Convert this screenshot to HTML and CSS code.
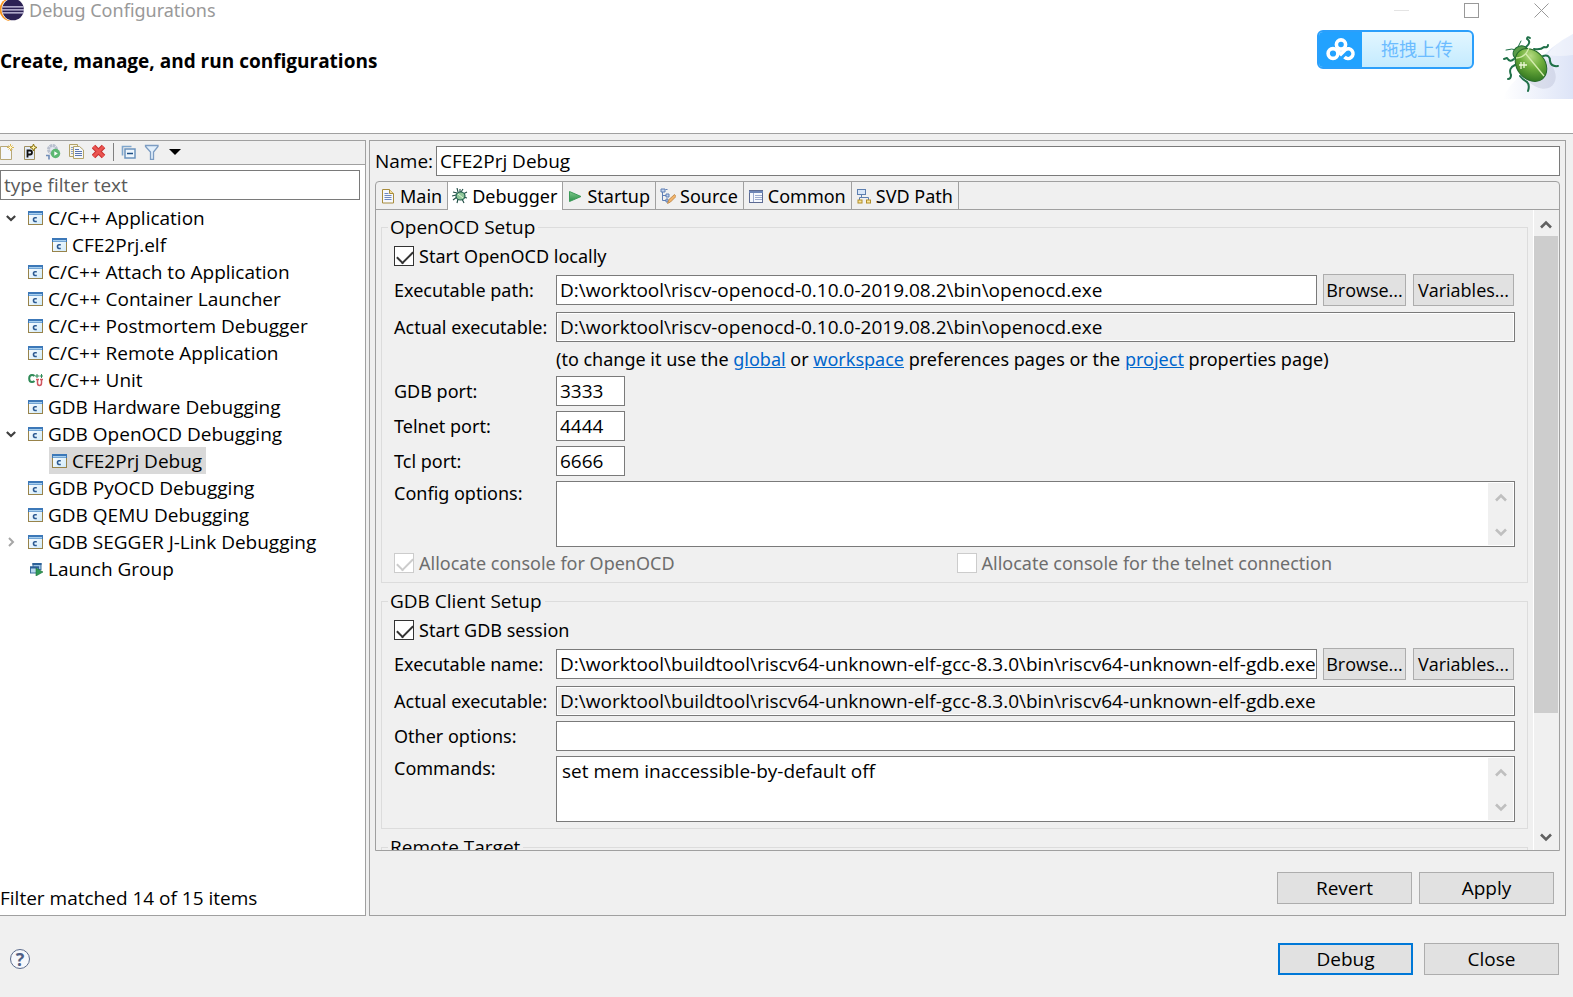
FILE: index.html
```html
<!DOCTYPE html>
<html lang="en">
<head>
    <meta charset="UTF-8">
    <meta name="viewport" content="width=device-width, initial-scale=1.0">
    <title>Debug Configurations</title>
    <link rel="stylesheet" href="styles.css">
</head>
<body>
    <!-- shared icons -->
    <svg class="icon-defs" aria-hidden="true">
        <defs>
            <linearGradient id="paneFill" x1="0" y1="0" x2="1" y2="1">
                <stop offset="0" stop-color="#ffffff"/>
                <stop offset="1" stop-color="#cfeafa"/>
            </linearGradient>
            <linearGradient id="greenFill" x1="0" y1="0" x2="0" y2="1">
                <stop offset="0" stop-color="#7cc98a"/>
                <stop offset="1" stop-color="#2d8f4a"/>
            </linearGradient>
            <symbol id="i-capp" viewBox="0 0 15 14">
                <rect x="0.5" y="0.5" width="14" height="13" fill="url(#paneFill)" stroke="#98834a"/>
                <path d="M0 0h15v4H0z" fill="#3c78b8"/>
                <path d="M1 2h13v1.500H1z" fill="#a8d0ef"/>
                <path d="M8.800 6.700H7Q5.500 6.700 5.500 8.600T7 10.500H8.800" fill="none" stroke="#2c5a92" stroke-width="1.600"/>
            </symbol>
            <symbol id="i-down" viewBox="0 0 12 10">
                <path d="M1 2.500L6 7.500L11 2.500" fill="none" stroke="currentColor" stroke-width="2.600"/>
            </symbol>
            <symbol id="i-up" viewBox="0 0 12 10">
                <path d="M1 7.500L6 2.500L11 7.500" fill="none" stroke="currentColor" stroke-width="2.600"/>
            </symbol>
        </defs>
    </svg>

    <!-- title bar and banner -->
    <header class="banner">
        <div class="title-bar">
            <svg class="logo" width="25" height="22" viewBox="0 0 25 22">
                <circle cx="11" cy="9.500" r="11.500" fill="#f7941e"/>
                <circle cx="13" cy="9.500" r="11.500" fill="#fff"/>
                <circle cx="13" cy="9.500" r="10.800" fill="#2c2255"/>
                <path d="M2.500 6.800h21M2 9.800h22M2.500 12.800h21" stroke="#d8d4ee" stroke-width="1.300"/>
            </svg>
            <span class="window-title">Debug Configurations</span>
            <div class="window-controls">
                <button class="win-btn" aria-label="Minimize"><svg width="16" height="16"><path d="M0 7.500h15" stroke="#e4e4e4"/></svg></button>
                <button class="win-btn" aria-label="Maximize"><svg width="16" height="16"><rect x="0.500" y="0.500" width="14" height="14" fill="none" stroke="#999"/></svg></button>
                <button class="win-btn" aria-label="Close window"><svg width="16" height="16"><path d="M0.500 0.500l14 14M14.500 0.500l-14 14" stroke="#999"/></svg></button>
            </div>
        </div>
        <h1 class="heading">Create, manage, and run configurations</h1>

        <button class="upload">
            <span class="upload-icon">
                <svg width="30" height="24" viewBox="0 0 30 24" fill="none" stroke="#fff" stroke-width="3.600">
                    <circle cx="15" cy="6.500" r="4.600"/>
                    <circle cx="7" cy="15.500" r="4.900"/>
                    <path d="M10.500 11.500L15 16L19.500 11.500A4.900 4.900 0 1 1 18.500 19"/>
                </svg>
            </span>
            <span class="upload-text">拖拽上传</span>
        </button>

        <svg class="bug" width="70" height="66" viewBox="0 0 70 66">
            <defs>
                <linearGradient id="sky" x1="0" y1="0" x2="1" y2="0">
                    <stop offset="0" stop-color="#fff"/>
                    <stop offset="1" stop-color="#dde4f7"/>
                </linearGradient>
                <radialGradient id="shell" cx="0.300" cy="0.300" r="0.800">
                    <stop offset="0" stop-color="#b4da80"/>
                    <stop offset="0.450" stop-color="#6fae3c"/>
                    <stop offset="1" stop-color="#2f7420"/>
                </radialGradient>
            </defs>
            <path d="M0 66Q6 48 30 34Q48 12 70 1V66z" fill="url(#sky)"/>
            <path d="M70 1Q54 8 44 22Q56 24 70 22z" fill="#fff" opacity="0.400"/>
            <ellipse cx="36" cy="39" rx="19" ry="14" transform="rotate(45 36 39)" fill="#8a8fb0" opacity="0.200"/>
            <g fill="none" stroke="#1f7048" stroke-width="2" stroke-linecap="round" stroke-linejoin="round">
                <path d="M14 17Q9 15 3 17M15 14L18 8" stroke-width="1"/>
                <path d="M23 14Q29 9 24 6Q24 3 27 5M31 16Q38 17 41 14Q45 15 45 12M40 23Q47 21 47 28Q48 34 55 33"/>
                <path d="M11 26Q7 30 4 25L1 26M12 32Q5 35 8 42Q8 46 5 46M17 43Q20 47 24 49Q27 52 25 58"/>
            </g>
            <ellipse cx="18" cy="20" rx="8" ry="7" transform="rotate(-20 18 20)" fill="#5a9c48" stroke="#1f6a34"/>
            <ellipse cx="28" cy="32" rx="18" ry="14" transform="rotate(50 28 32)" fill="url(#shell)" stroke="#25692a"/>
            <path d="M13 25Q22 25 26 15M23 21L41 43" fill="none" stroke="#d4ecae" stroke-width="1.300"/>
            <path d="M18 29v7M21 29v6M16 32h8" stroke="#eef9d8" stroke-width="1.300"/>
        </svg>
    </header>

    <main class="content">
        <!-- configuration list -->
        <section class="list-panel">
            <div class="toolbar">
                <button class="tool" aria-label="New launch configuration"><svg width="16" height="16" viewBox="0 0 16 16"><path d="M0.500 2.500h8l3 3v10h-11z" fill="#f4f7fc" stroke="#b8a878"/><path d="M10.500 0v7M7 3.500h7M8.500 1.500l4 4M12.500 1.500l-4 4" stroke="#dcb850"/><path d="M10.500 2v3M9 3.500h3" stroke="#fff7c8"/></svg></button>
                <button class="tool" aria-label="New prototype"><svg width="16" height="16" viewBox="0 0 16 16"><path d="M1.500 2.500h10v13h-10z" fill="#e4ecf8" stroke="#a09060"/><path d="M4.500 13.500v-7h2.500q2 0 2 2t-2 2H4.500" fill="none" stroke="#111" stroke-width="1.800"/><path d="M10.500 0l1 2.500l2.500 1l-2.500 1l-1 2.500l-1-2.500l-2.500-1l2.500-1z" fill="#fff3a8" stroke="#8a7310"/></svg></button>
                <button class="tool" aria-label="Export"><svg width="16" height="16" viewBox="0 0 16 16"><circle cx="6.500" cy="5.500" r="4" fill="#e4e8f0" stroke="#b8bfce" stroke-width="3" stroke-dasharray="2.500 0.600"/><circle cx="9.500" cy="9.500" r="4.700" fill="#5cb872"/><path d="M8.300 7.200v4.600l3.500-2.300z" fill="#fff"/><path d="M0 11.500h3v4" fill="none" stroke="#6f8cb8" stroke-width="1.600"/></svg></button>
                <button class="tool" aria-label="Duplicate"><svg width="16" height="16" viewBox="0 0 16 16"><path d="M0.500 0.500h8v12h-8z" fill="#f8f4e4" stroke="#b3a369"/><path d="M2 3.500h3M2 5.500h3M2 7.500h3M2 9.500h3" stroke="#8aa0cc"/><path d="M4.500 2.500h6l4 3.500v8.500H4.500z" fill="#f5f8fd" stroke="#b3a369"/><path d="M6 5.500h4M6 7.500h7M6 9.500h7M6 11.500h7" stroke="#5a76b0"/></svg></button>
                <button class="tool" aria-label="Delete"><svg width="16" height="16" viewBox="0 0 16 16"><path d="M1.500 2.500l10 10M11.500 2.500l-10 10" stroke="#c93030" stroke-width="5"/><path d="M1.500 2.500l10 10M11.500 2.500l-10 10" stroke="#ea5450" stroke-width="3"/></svg></button>
                <span class="tool-sep"></span>
                <button class="tool" aria-label="Collapse all"><svg width="16" height="16" viewBox="0 0 16 16"><path d="M1.500 11.500v-9h9" fill="none" stroke="#7fa6cc" stroke-width="1.600"/><rect x="4" y="5" width="10" height="9" fill="#eef6fd" stroke="#6b93bd" stroke-width="1.500"/><path d="M6 9.500h6" stroke="#1d4f86" stroke-width="1.500"/></svg></button>
                <button class="tool" aria-label="Filter"><svg width="16" height="16" viewBox="0 0 16 16"><path d="M1.500 1.500h12.500v1L9.500 8v7.500H6.500V8L1.500 2.500z" fill="#e2effb" stroke="#7c9cc2" stroke-width="1.300"/></svg></button>
                <button class="tool" aria-label="Filter menu"><svg width="16" height="16" viewBox="0 0 16 16"><path d="M2 5h12l-6 6z" fill="#000"/></svg></button>
            </div>
            <input class="field filter" type="text" placeholder="type filter text" aria-label="Filter">
            <ul class="tree">
                <li class="node"><svg class="twist"><use href="#i-down"/></svg><svg class="node-icon"><use href="#i-capp"/></svg><span>C/C++ Application</span></li>
                <li class="node child"><span class="node-body"><svg class="node-icon"><use href="#i-capp"/></svg><span>CFE2Prj.elf</span></span></li>
                <li class="node"><svg class="twist"></svg><svg class="node-icon"><use href="#i-capp"/></svg><span>C/C++ Attach to Application</span></li>
                <li class="node"><svg class="twist"></svg><svg class="node-icon"><use href="#i-capp"/></svg><span>C/C++ Container Launcher</span></li>
                <li class="node"><svg class="twist"></svg><svg class="node-icon"><use href="#i-capp"/></svg><span>C/C++ Postmortem Debugger</span></li>
                <li class="node"><svg class="twist"></svg><svg class="node-icon"><use href="#i-capp"/></svg><span>C/C++ Remote Application</span></li>
                <li class="node"><svg class="twist"></svg><svg class="node-icon" viewBox="0 0 15 14"><path d="M6.500 3Q5.500 2 4 2Q1.200 2 1.200 5.500T4 9Q5.500 9 6.500 8" fill="none" stroke="#2f8a57" stroke-width="2"/><path d="M7 3h4M9 1v4M11.500 3h4M13.500 1v4" stroke="#2f8a57"/><path d="M9.500 6v4q0 2.500 2 2.500t2-2.500V6M8 6.500h3M12 6.500h3" fill="none" stroke="#cf5560" stroke-width="1.500"/></svg><span>C/C++ Unit</span></li>
                <li class="node"><svg class="twist"></svg><svg class="node-icon"><use href="#i-capp"/></svg><span>GDB Hardware Debugging</span></li>
                <li class="node"><svg class="twist"><use href="#i-down"/></svg><svg class="node-icon"><use href="#i-capp"/></svg><span>GDB OpenOCD Debugging</span></li>
                <li class="node child"><span class="node-body selected"><svg class="node-icon"><use href="#i-capp"/></svg><span>CFE2Prj Debug</span></span></li>
                <li class="node"><svg class="twist"></svg><svg class="node-icon"><use href="#i-capp"/></svg><span>GDB PyOCD Debugging</span></li>
                <li class="node"><svg class="twist"></svg><svg class="node-icon"><use href="#i-capp"/></svg><span>GDB QEMU Debugging</span></li>
                <li class="node"><svg class="twist closed" viewBox="0 0 10 10"><path d="M3 1L7 5L3 9" fill="none" stroke="currentColor" stroke-width="2"/></svg><svg class="node-icon"><use href="#i-capp"/></svg><span>GDB SEGGER J-Link Debugging</span></li>
                <li class="node"><svg class="twist"></svg><svg class="node-icon" viewBox="0 0 15 14"><rect x="5" y="1.500" width="8" height="6" fill="#9cc4e4" stroke="#3d6f9e"/><rect x="2.500" y="5" width="8" height="6" fill="#b8d8ef" stroke="#3d6f9e"/><path d="M2 5.500h9M4.500 2h9" stroke="#2d6198" stroke-width="2"/><path d="M8 6l7 4l-7 4z" fill="#2f9a55" stroke="#1f6f3e" stroke-width="0.600"/></svg><span>Launch Group</span></li>
            </ul>
            <p class="status">Filter matched 14 of 15 items</p>
        </section>

        <!-- configuration editor -->
        <section class="edit-panel">
            <div class="name-row">
                <label for="name">Name:</label>
                <input class="field grow" id="name" type="text" value="CFE2Prj Debug">
            </div>

            <div class="tab-folder">
                <div class="tabs" role="tablist">
                    <button class="tab" role="tab"><svg width="16" height="16" viewBox="0 0 16 16"><path d="M2.500 1.500h7l4 4v9.500h-11z" fill="#f6f8fd" stroke="#a88c3c"/><path d="M9.500 1.500v4h4" fill="#f2dc9a" stroke="#a88c3c"/><path d="M4.500 5.500h4M4.500 7.500h7M4.500 9.500h7M4.500 11.500h7" stroke="#6d88c0"/></svg>Main</button>
                    <button class="tab active" role="tab" aria-selected="true"><svg width="16" height="16" viewBox="0 0 16 16"><path d="M5 5L1 4M6 4L5 0M9 4L11 1M11 6L15 4M11 9L15 10M10 11L12 15M6 11L5 15M5 9L1 12M4 7L0 8M8 4L8 1" stroke="#1d4b42" stroke-width="1.100"/><ellipse cx="8.500" cy="8" rx="4.500" ry="4" fill="#8fc79a" stroke="#1f5e4c" stroke-width="1.200"/><path d="M6 6l5 4" stroke="#e4f6d8"/></svg>Debugger</button>
                    <button class="tab" role="tab"><svg width="16" height="16" viewBox="0 0 16 16"><path d="M2.500 3.500L14 8.500L2.500 13.500z" fill="url(#greenFill)" stroke="#3c9a58"/></svg>Startup</button>
                    <button class="tab" role="tab"><svg width="16" height="16" viewBox="0 0 16 16"><path d="M2.500 3v9.500h4M2.500 7.500h4" fill="none" stroke="#5f7eb4"/><path d="M1 1h4v3H1zM5.500 1.500h2M6 6h3v3H6zM6 11h2v3H6z" fill="#c4d4ee" stroke="#5f7eb4"/><path d="M7.500 15.500l1.500-4l5.500-5l1.500 2l-5.500 5.500z" fill="#f2b46c" stroke="#b9803e" stroke-width="0.800"/></svg>Source</button>
                    <button class="tab" role="tab"><svg width="16" height="16" viewBox="0 0 16 16"><rect x="1.500" y="2.500" width="13" height="12" fill="#f5f8fe" stroke="#5c6a92"/><path d="M1 3h14v2H1z" fill="#6d86b8"/><path d="M5.500 5v9M7 7.500h7M7 9.500h7M7 11.500h7" stroke="#9cacd0"/></svg>Common</button>
                    <button class="tab" role="tab"><svg width="16" height="16" viewBox="0 0 16 16"><rect x="1.500" y="1.500" width="8" height="5" fill="#d8e6f8" stroke="#5d7fb0"/><path d="M5.500 7v2.500M3.500 12V9.500H12.500V12" fill="none" stroke="#5d7fb0"/><rect x="2" y="12" width="4" height="3" fill="#fbe79a" stroke="#b08c28"/><rect x="10.500" y="12" width="4" height="3" fill="#fbe79a" stroke="#b08c28"/></svg>SVD Path</button>
                </div>

                <div class="tab-body">
                    <form class="form">
                        <fieldset class="group">
                            <legend>OpenOCD Setup</legend>
                            <div class="check-row">
                                <label class="check"><input type="checkbox" checked>Start OpenOCD locally</label>
                            </div>
                            <div class="row with-buttons">
                                <label class="row-label" for="ocdPath">Executable path:</label>
                                <input class="field grow" id="ocdPath" type="text" value="D:\worktool\riscv-openocd-0.10.0-2019.08.2\bin\openocd.exe">
                                <div class="row-buttons">
                                    <button class="btn browse" type="button">Browse...</button>
                                    <button class="btn variables" type="button">Variables...</button>
                                </div>
                            </div>
                            <div class="row">
                                <label class="row-label" for="ocdActual">Actual executable:</label>
                                <input class="field grow" id="ocdActual" type="text" readonly value="D:\worktool\riscv-openocd-0.10.0-2019.08.2\bin\openocd.exe">
                            </div>
                            <p class="hint">(to change it use the <a href="#">global</a> or <a href="#">workspace</a> preferences pages or the <a href="#">project</a> properties page)</p>
                            <div class="row">
                                <label class="row-label" for="gdbPort">GDB port:</label>
                                <input class="field port" id="gdbPort" type="text" value="3333">
                            </div>
                            <div class="row">
                                <label class="row-label" for="telnetPort">Telnet port:</label>
                                <input class="field port" id="telnetPort" type="text" value="4444">
                            </div>
                            <div class="row">
                                <label class="row-label" for="tclPort">Tcl port:</label>
                                <input class="field port" id="tclPort" type="text" value="6666">
                            </div>
                            <div class="row top">
                                <label class="row-label" for="config">Config options:</label>
                                <div class="area grow">
                                    <textarea id="config"></textarea>
                                    <div class="area-scroll"><svg><use href="#i-up"/></svg><svg><use href="#i-down"/></svg></div>
                                </div>
                            </div>
                            <div class="check-row">
                                <label class="check"><input type="checkbox" checked disabled>Allocate console for OpenOCD</label>
                                <label class="check"><input type="checkbox" disabled>Allocate console for the telnet connection</label>
                            </div>
                        </fieldset>

                        <fieldset class="group">
                            <legend>GDB Client Setup</legend>
                            <div class="check-row">
                                <label class="check"><input type="checkbox" checked>Start GDB session</label>
                            </div>
                            <div class="row with-buttons">
                                <label class="row-label" for="gdbName">Executable name:</label>
                                <input class="field grow" id="gdbName" type="text" value="D:\worktool\buildtool\riscv64-unknown-elf-gcc-8.3.0\bin\riscv64-unknown-elf-gdb.exe">
                                <div class="row-buttons">
                                    <button class="btn browse" type="button">Browse...</button>
                                    <button class="btn variables" type="button">Variables...</button>
                                </div>
                            </div>
                            <div class="row">
                                <label class="row-label" for="gdbActual">Actual executable:</label>
                                <input class="field grow" id="gdbActual" type="text" readonly value="D:\worktool\buildtool\riscv64-unknown-elf-gcc-8.3.0\bin\riscv64-unknown-elf-gdb.exe">
                            </div>
                            <div class="row">
                                <label class="row-label" for="other">Other options:</label>
                                <input class="field grow" id="other" type="text">
                            </div>
                            <div class="row top">
                                <label class="row-label" for="commands">Commands:</label>
                                <div class="area grow">
                                    <textarea id="commands">set mem inaccessible-by-default off</textarea>
                                    <div class="area-scroll"><svg><use href="#i-up"/></svg><svg><use href="#i-down"/></svg></div>
                                </div>
                            </div>
                        </fieldset>

                        <fieldset class="group">
                            <legend>Remote Target</legend>
                        </fieldset>
                    </form>
                    <div class="scrollbar">
                        <svg><use href="#i-up"/></svg>
                        <div class="track"><div class="thumb"></div></div>
                        <svg><use href="#i-down"/></svg>
                    </div>
                </div>
            </div>

            <div class="edit-actions">
                <button class="btn wide">Revert</button>
                <button class="btn wide">Apply</button>
            </div>
        </section>
    </main>

    <footer class="footer">
        <button class="help" aria-label="Help">?</button>
        <div class="footer-actions">
            <button class="btn wide primary">Debug</button>
            <button class="btn wide">Close</button>
        </div>
    </footer>
</body>
</html>
```
FILE: styles.css
```css
* {
    margin: 0;
    padding: 0;
    box-sizing: border-box;
}

body {
    font-family: "Open Sans", "Noto Sans CJK SC", sans-serif;
    font-size: 19px;
    line-height: 24px;
    color: #000;
    background: #f0f0f0;
    height: 100vh;
    display: flex;
    flex-direction: column;
    overflow: hidden;
}

button,
input,
textarea {
    font: inherit;
    color: inherit;
}

svg {
    flex: none;
}

.icon-defs {
    position: absolute;
    width: 0;
    height: 0;
}

/* banner */
.banner {
    position: relative;
    flex: none;
    height: 134px;
    background: #fff;
    border-bottom: 1px solid #a0a0a0;
}

.title-bar {
    display: flex;
    align-items: center;
    height: 21px;
    padding-right: 23px;
}

.window-title,
.tab,
.row-label,
.hint,
.check {
    font-family: "Noto Sans", sans-serif;
    font-size: 18px;
}

.window-title {
    margin-left: 4px;
    padding-bottom: 2px;
    color: #999;
}

.window-controls {
    display: flex;
    gap: 54px;
    margin-left: auto;
}

.win-btn {
    display: flex;
    width: 16px;
    height: 16px;
    background: none;
    border: none;
}

.heading {
    margin-top: 28px;
    font-size: 19px;
    line-height: 24px;
    font-weight: bold;
}

.upload {
    position: absolute;
    top: 30px;
    right: 99px;
    display: flex;
    width: 157px;
    height: 39px;
    border: 2px solid #2b9ffb;
    border-radius: 6px;
    background: linear-gradient(#e2f6ff, #c4ebff);
    overflow: hidden;
}

.upload-icon {
    display: flex;
    align-items: center;
    justify-content: center;
    width: 43px;
    height: 35px;
    background: #22a2ff;
}

.upload-text {
    flex: 1;
    font-size: 18px;
    line-height: 35px;
    color: #6cbcff;
}

.bug {
    position: absolute;
    top: 33px;
    right: 0;
}

/* main area */
.content {
    flex: 1;
    min-height: 0;
    display: flex;
    gap: 3px;
    padding: 6px 7px 0 0;
}

.list-panel {
    flex: none;
    display: flex;
    flex-direction: column;
    width: 366px;
    background: #fff;
    border: 1px solid #a0a0a0;
    border-left: none;
}

.toolbar {
    display: flex;
    align-items: center;
    gap: 7px;
    height: 24px;
    padding-bottom: 1px;
    background: #f0f0f0;
    border-bottom: 1px solid #a0a0a0;
}

.tool {
    display: flex;
    width: 16px;
    height: 16px;
    background: none;
    border: none;
}

.tool-sep {
    width: 1px;
    height: 18px;
    margin: 0 0 0 -2px;
    background: #808080;
}

.field {
    height: 30px;
    padding-left: 3px;
    min-width: 0;
    background: #fff;
    border: 1px solid #7a7a7a;
    outline: none;
}

.field[readonly] {
    background: #f0f0f0;
    box-shadow: inset 0 0 0 1px #fff;
}

.field::placeholder {
    color: #5a5a5a;
}

.grow {
    flex: 1;
}

.filter {
    width: 360px;
    margin: 5px 0 4px;
}

.tree {
    list-style: none;
}

.node {
    display: flex;
    align-items: center;
    height: 27px;
    padding-left: 6px;
    white-space: nowrap;
}

.child {
    padding-left: 49px;
}

.node-body {
    display: flex;
    align-items: center;
    height: 27px;
    padding: 0 4px 0 3px;
}

.selected {
    background: #d9d9d9;
}

.twist {
    width: 10px;
    height: 10px;
    margin-right: 12px;
    color: #404040;
}

.closed {
    color: #a6a6a6;
}

.node-icon {
    width: 15px;
    height: 14px;
    margin-right: 5px;
}

.status {
    margin-top: auto;
    padding-bottom: 5px;
}

/* editor */
.edit-panel {
    flex: 1;
    min-width: 0;
    display: flex;
    flex-direction: column;
    padding: 5px;
    border: 1px solid #a0a0a0;
}

.name-row {
    display: flex;
    align-items: center;
    margin-bottom: 5px;
}

.name-row label {
    width: 61px;
}

.tab-folder {
    flex: 1;
    min-height: 0;
    display: flex;
    flex-direction: column;
    border: 1px solid #a0a0a0;
    border-radius: 4px 4px 0 0;
}

.tabs {
    display: flex;
    flex: none;
    height: 28px;
    border-bottom: 1px solid #a0a0a0;
}

.tab {
    display: flex;
    align-items: center;
    gap: 4px;
    padding: 0 5px 0 4px;
    height: 27px;
    background: none;
    border: none;
    border-right: 1px solid #a0a0a0;
    white-space: nowrap;
}

.tab.active {
    height: 28px;
    background: #fff;
}

.tab-body {
    flex: 1;
    min-height: 0;
    display: flex;
    overflow: hidden;
}

.form {
    flex: 1;
    min-width: 0;
    padding: 5px 5px 0;
}

.group {
    display: flex;
    flex-direction: column;
    gap: 5px;
    min-width: 0;
    margin-bottom: 6px;
    padding: 6px 12px;
    border: 1px solid #dcdcdc;
}

.group legend {
    margin-left: -6px;
    padding: 0 3px 0 2px;
}

.row {
    display: flex;
    align-items: center;
}

.row.top {
    align-items: flex-start;
}

.with-buttons {
    padding-bottom: 1px;
}

.row-label {
    flex: none;
    width: 162px;
    white-space: nowrap;
}

.row-buttons {
    display: flex;
    gap: 7px;
    padding: 0 1px 0 6px;
}

.port {
    width: 69px;
}

.hint {
    padding-left: 162px;
}

.hint a {
    color: #0066cc;
}

.check-row {
    display: grid;
    grid-template-columns: 1fr 1fr;
    column-gap: 4px;
}

.check {
    display: flex;
    align-items: center;
    gap: 5px;
    height: 24px;
    padding-bottom: 2px;
    white-space: nowrap;
}

.check input {
    appearance: none;
    width: 20px;
    height: 20px;
    background: #fff;
    border: 1px solid #333;
}

.check input:checked::before {
    content: "";
    display: block;
    width: 14px;
    height: 7px;
    margin: 4px 2px;
    border-left: 2px solid #333;
    border-bottom: 2px solid #333;
    transform: rotate(-45deg);
}

.check:has(input:disabled) {
    color: #6d6d6d;
}

.check input:disabled,
.check input:disabled::before {
    border-color: #ccc;
}

.area {
    display: flex;
    height: 66px;
    padding: 1px;
    background: #fff;
    border: 1px solid #7a7a7a;
}

.area textarea {
    flex: 1;
    padding: 1px 4px;
    border: none;
    outline: none;
    resize: none;
    overflow: hidden;
}

.area-scroll {
    display: flex;
    flex-direction: column;
    justify-content: space-between;
    align-items: center;
    width: 25px;
    padding: 10px 0 8px;
    background: #f0f0f0;
    color: #bfbfbf;
}

.area-scroll svg,
.scrollbar svg {
    width: 12px;
    height: 10px;
}

.scrollbar {
    display: flex;
    flex-direction: column;
    align-items: center;
    width: 26px;
    padding: 10px 1px 8px 0;
    border-left: 1px solid #fff;
    color: #606060;
}

.track {
    flex: 1;
    align-self: stretch;
    margin: 6px 0 0;
}

.thumb {
    height: 80%;
    background: #cdcdcd;
}

/* buttons */
.btn {
    height: 32px;
    background: #e1e1e1;
    border: 1px solid #adadad;
    white-space: nowrap;
}

.browse {
    width: 83px;
    font-size: 18px;
}

.variables {
    width: 101px;
    font-size: 18px;
}

.wide {
    width: 135px;
}

.primary {
    border: 2px solid #0078d7;
}

.edit-actions {
    display: flex;
    justify-content: flex-end;
    gap: 7px;
    padding: 21px 6px 6px 0;
}

.footer {
    flex: none;
    display: flex;
    justify-content: space-between;
    align-items: center;
    height: 81px;
    padding: 5px 14px 0 10px;
}

.footer-actions {
    display: flex;
    gap: 11px;
}

.help {
    width: 20px;
    height: 20px;
    border: 1px solid #5b6b8c;
    border-radius: 50%;
    background: #f6f8fc;
    color: #4f5f85;
    font-size: 18px;
    line-height: 18px;
    font-weight: bold;
}
```
